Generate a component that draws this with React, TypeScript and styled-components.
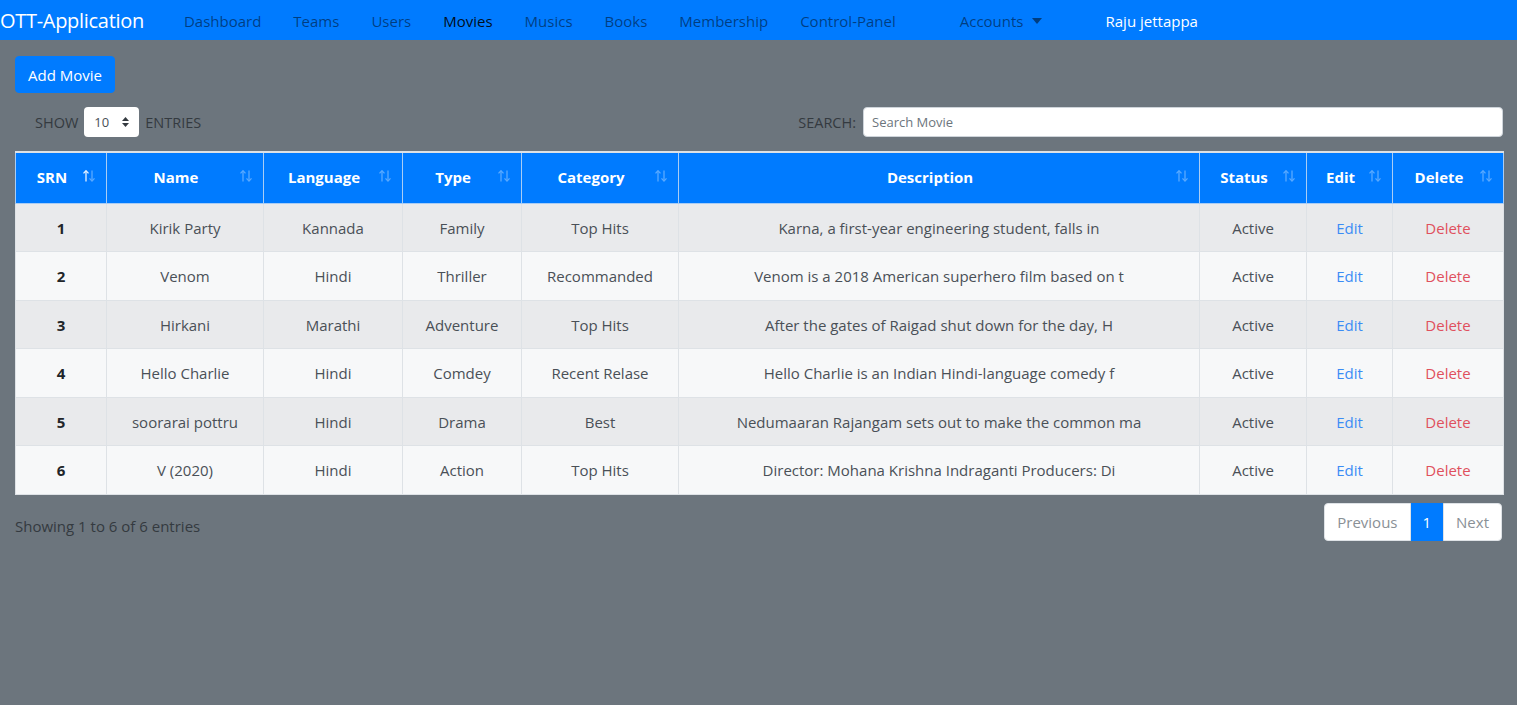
import React from "react";
import styled, { createGlobalStyle } from "styled-components";

const GlobalStyle = createGlobalStyle`
  html, body { margin: 0; padding: 0; }
  body {
    background: #6c757d;
    font-family: "Open Sans", "Noto Sans", Arial, sans-serif;
    color: #212529;
    min-height: 705px;
  }
  * { box-sizing: border-box; }
`;

const Navbar = styled.nav`
  height: 40px;
  background: #007bff;
  display: flex;
  align-items: center;
  padding-top: 1px;
`;

const Brand = styled.a`
  font-size: 20px;
  color: #fff;
  margin-right: 24px;
  letter-spacing: -0.3px;
  white-space: nowrap;
`;

const NavLink = styled.a<{ $active?: boolean; $gap?: number }>`
  font-size: 15px;
  padding: 0 16px;
  margin-left: ${(p) => p.$gap ?? 0}px;
  color: ${(p) => (p.$active ? "rgba(0,0,0,0.9)" : "rgba(0,0,0,0.5)")};
  white-space: nowrap;
  display: flex;
  align-items: center;
  gap: 8px;
`;

const UserName = styled.span`
  font-size: 15px;
  color: #fff;
  margin-left: 48px;
  white-space: nowrap;
`;

const Main = styled.main`
  padding: 16px 14px 0 15px;
`;

const PrimaryButton = styled.button`
  background: #007bff;
  color: #fff;
  border: 1px solid #007bff;
  border-radius: 4px;
  font-family: inherit;
  font-size: 15px;
  height: 37px;
  padding: 0 12px;
`;

const ControlsRow = styled.div`
  display: flex;
  justify-content: space-between;
  align-items: center;
  margin-top: 14px;
  height: 30px;
`;

const Label = styled.label`
  font-size: 14.5px;
  color: #343a40;
  display: flex;
  align-items: center;
  gap: 6px;
`;

const LengthSelect = styled.div`
  width: 55px;
  height: 30px;
  background: #fff;
  border-radius: 4px;
  display: flex;
  align-items: center;
  justify-content: space-between;
  padding: 0 10px 0 10px;
  font-size: 13px;
  color: #495057;
`;

const ShowLabel = styled(Label)`
  padding-left: 20px;
`;

const SearchLabel = styled(Label)`
  gap: 7px;
`;

const SearchInput = styled.input`
  width: 640px;
  height: 30px;
  border: 1px solid #ced4da;
  border-radius: 4px;
  padding: 0 8px;
  font-family: inherit;
  font-size: 13px;
  color: #495057;
  &::placeholder { color: #6c757d; }
`;

const Table = styled.table`
  width: 1488px;
  margin-top: 14px;
  border-collapse: collapse;
  border: 1px solid #dee2e6;
  table-layout: fixed;
`;

const Th = styled.th`
  position: relative;
  background: #007bff;
  color: #fff;
  font-weight: 700;
  font-size: 15px;
  height: 51px;
  padding: 0 30px 2px 12px;
  text-align: center;
  border: 1px solid #a9cdf5;
  border-top: 2px solid #dee2e6;
  white-space: nowrap;
`;

const SortIcon = styled.span`
  position: absolute;
  right: 10px;
  top: 50%;
  transform: translateY(-66%);
  display: flex;
`;

const Row = styled.tr<{ $odd: boolean }>`
  background: ${(p) => (p.$odd ? "#e9eaec" : "#f7f8f9")};
`;

const Td = styled.td<{ $tone?: "bold" | "edit" | "delete" }>`
  height: 48.5px;
  padding: 1px 12px 0;
  text-align: center;
  font-size: 15px;
  border: 1px solid #dee2e6;
  white-space: nowrap;
  overflow: hidden;
  font-weight: ${(p) => (p.$tone === "bold" ? 700 : 400)};
  color: ${(p) =>
    p.$tone === "edit" ? "#3b8cf5" : p.$tone === "delete" ? "#e0505d" : p.$tone === "bold" ? "#212529" : "#4a5057"};
`;

const Footer = styled.div`
  display: flex;
  justify-content: space-between;
  align-items: flex-start;
  margin-top: 8px;
  width: 1488px;
`;

const Info = styled.div`
  font-size: 15px;
  color: #343a40;
  margin-top: 13px;
`;

const Pager = styled.div`
  display: flex;
  margin-right: 1px;
`;

const PageItem = styled.span<{ $active?: boolean; $pos?: "first" | "last" }>`
  height: 38px;
  display: flex;
  align-items: center;
  padding: 0 ${(p) => (p.$active ? 11 : 12)}px;
  font-size: 15px;
  background: ${(p) => (p.$active ? "#007bff" : "#fff")};
  color: ${(p) => (p.$active ? "#fff" : "#8a9096")};
  border: 1px solid ${(p) => (p.$active ? "#007bff" : "#dee2e6")};
  border-radius: ${(p) => (p.$pos === "first" ? "4px 0 0 4px" : p.$pos === "last" ? "0 4px 4px 0" : "0")};
`;

const SortArrows = ({ active }: { active?: boolean }) => (
  <svg width="14" height="13" viewBox="0 0 14 13">
    <g stroke="#fff" strokeWidth="1.3" fill="none">
      <g opacity={active ? 0.9 : 0.35}>
        <path d="M4 12V1.5" />
        <path d="M1.5 4L4 1.3L6.5 4" />
      </g>
      <g opacity="0.35">
        <path d="M10 1v10.5" />
        <path d="M7.5 9L10 11.7L12.5 9" />
      </g>
    </g>
  </svg>
);

const columns = ["SRN", "Name", "Language", "Type", "Category", "Description", "Status", "Edit", "Delete"];
const widths = [91, 157, 139, 119, 157, 521, 107, 86, 111];

const movies = [
  ["1", "Kirik Party", "Kannada", "Family", "Top Hits", "Karna, a first-year engineering student, falls in"],
  ["2", "Venom", "Hindi", "Thriller", "Recommanded", "Venom is a 2018 American superhero film based on t"],
  ["3", "Hirkani", "Marathi", "Adventure", "Top Hits", "After the gates of Raigad shut down for the day, H"],
  ["4", "Hello Charlie", "Hindi", "Comdey", "Recent Relase", "Hello Charlie is an Indian Hindi-language comedy f"],
  ["5", "soorarai pottru", "Hindi", "Drama", "Best", "Nedumaaran Rajangam sets out to make the common ma"],
  ["6", "V (2020)", "Hindi", "Action", "Top Hits", "Director: Mohana Krishna Indraganti Producers: Di"],
];

export default function App() {
  return (
    <>
      <GlobalStyle />
      <Navbar>
        <Brand>OTT-Application</Brand>
        <NavLink>Dashboard</NavLink>
        <NavLink>Teams</NavLink>
        <NavLink>Users</NavLink>
        <NavLink $active>Movies</NavLink>
        <NavLink>Musics</NavLink>
        <NavLink>Books</NavLink>
        <NavLink>Membership</NavLink>
        <NavLink>Control-Panel</NavLink>
        <NavLink $gap={32}>
          Accounts
          <svg width="10" height="6" viewBox="0 0 10 6">
            <path d="M0 0h10L5 6z" fill="rgba(0,0,0,0.5)" />
          </svg>
        </NavLink>
        <UserName>Raju jettappa</UserName>
      </Navbar>
      <Main>
        <PrimaryButton>Add Movie</PrimaryButton>
        <ControlsRow>
          <ShowLabel>
            SHOW
            <LengthSelect>
              10
              <svg width="7" height="10" viewBox="0 0 7 10">
                <path d="M3.5 0L7 4H0z M3.5 10L0 6h7z" fill="#343a40" />
              </svg>
            </LengthSelect>
            ENTRIES
          </ShowLabel>
          <SearchLabel>
            SEARCH:
            <SearchInput placeholder="Search Movie" />
          </SearchLabel>
        </ControlsRow>
        <Table>
          <colgroup>
            {widths.map((w, i) => (
              <col key={i} style={{ width: w }} />
            ))}
          </colgroup>
          <thead>
            <tr>
              {columns.map((c, i) => (
                <Th key={c}>
                  {c}
                  <SortIcon>
                    <SortArrows active={i === 0} />
                  </SortIcon>
                </Th>
              ))}
            </tr>
          </thead>
          <tbody>
            {movies.map((m, i) => (
              <Row key={m[0]} $odd={i % 2 === 0}>
                <Td $tone="bold">{m[0]}</Td>
                <Td>{m[1]}</Td>
                <Td>{m[2]}</Td>
                <Td>{m[3]}</Td>
                <Td>{m[4]}</Td>
                <Td>{m[5]}</Td>
                <Td>Active</Td>
                <Td $tone="edit">Edit</Td>
                <Td $tone="delete">Delete</Td>
              </Row>
            ))}
          </tbody>
        </Table>
        <Footer>
          <Info>Showing 1 to 6 of 6 entries</Info>
          <Pager>
            <PageItem $pos="first">Previous</PageItem>
            <PageItem $active>1</PageItem>
            <PageItem $pos="last">Next</PageItem>
          </Pager>
        </Footer>
      </Main>
    </>
  );
}
